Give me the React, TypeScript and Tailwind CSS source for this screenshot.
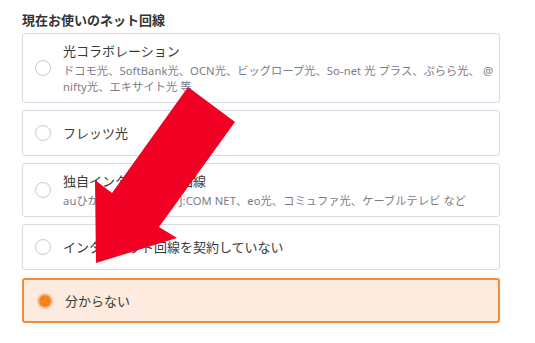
import React from "react";

const font = { fontFamily: '"Noto Sans", "Noto Sans CJK JP", sans-serif' };

function Radio({ checked = false }: { checked?: boolean }) {
  if (checked) {
    return (
      <span className="flex h-[16px] w-[16px] shrink-0 items-center justify-center rounded-full bg-[#fbc49c]">
        <span className="h-[12px] w-[12px] rounded-full bg-[#f7801f]" />
      </span>
    );
  }
  return <span className="h-[16px] w-[16px] shrink-0 rounded-full border border-[#c9c9d6] bg-white" />;
}

export default function App() {
  return (
    <div className="relative h-[343px] w-[535px] overflow-hidden bg-white" style={font}>
      <div className="pl-[22px] pt-[10px]">
        <div className="text-[13px] font-bold leading-[20px] text-[#333]">現在お使いのネット回線</div>
        <div className="mt-[3px] flex w-[478px] flex-col gap-[7px]">
          <div className="flex items-center gap-[12px] rounded-[3px] border border-[#d9d9e3] bg-white pb-[7px] pl-[12px] pr-[8px] pt-[7px]">
            <Radio />
            <div>
              <div className="text-[13px] leading-[20px] text-[#3a3a3a]">光コラボレーション</div>
              <div className="mt-[2px] whitespace-nowrap text-[11.2px] tracking-[0.1px] leading-[16px] text-[#7b7b85]">
                ドコモ光、SoftBank光、OCN光、ビッグロープ光、So-net 光 プラス、ぷらら光、 @
                <br />
                nifty光、エキサイト光 等
              </div>
            </div>
          </div>
          <div className="flex h-[46px] items-center gap-[12px] rounded-[3px] border border-[#d9d9e3] bg-white pl-[12px]">
            <Radio />
            <div className="text-[13px] leading-[20px] text-[#3a3a3a]">フレッツ光</div>
          </div>
          <div className="flex items-center gap-[12px] rounded-[3px] border border-[#d9d9e3] bg-white pb-[7px] pl-[12px] pt-[7px]">
            <Radio />
            <div>
              <div className="text-[13px] leading-[20px] text-[#3a3a3a]">独自インターネット回線</div>
              <div className="mt-[2px] whitespace-nowrap text-[11.2px] tracking-[0.1px] leading-[16px] text-[#7b7b85]">
                auひかり、NURO 光、J:COM NET、eo光、コミュファ光、ケーブルテレビ など
              </div>
            </div>
          </div>
          <div className="flex h-[46px] items-center gap-[12px] rounded-[3px] border border-[#d9d9e3] bg-white pl-[12px]">
            <Radio />
            <div className="text-[13px] leading-[20px] text-[#3a3a3a]">インターネット回線を契約していない</div>
          </div>
          <div className="mt-[1px] flex h-[45px] items-center gap-[12px] rounded-[3px] border-2 border-[#f6893a] bg-[#fdebdf] pl-[13px]">
            <Radio checked />
            <div className="text-[13px] leading-[20px] text-[#3a3a3a]">分からない</div>
          </div>
        </div>
      </div>
      <svg className="absolute left-0 top-0" width="535" height="343" viewBox="0 0 535 343">
        <polygon
          points="188,87 235,122 159,227 177,238 96,263 95,180 112,193"
          fill="#f00022"
        />
      </svg>
    </div>
  );
}
